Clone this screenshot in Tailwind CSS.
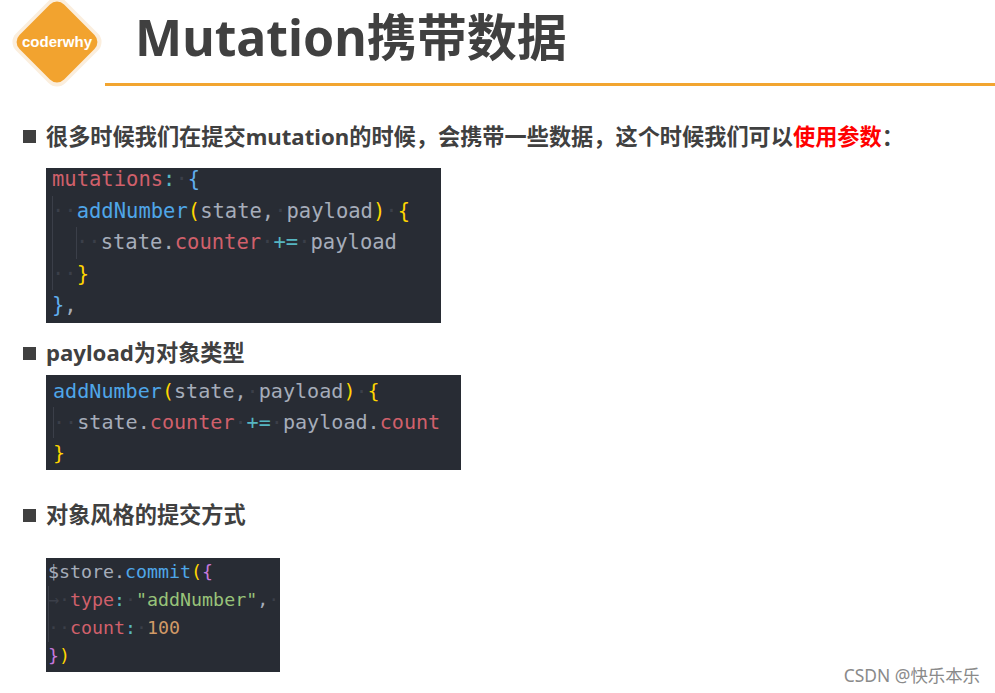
<!DOCTYPE html>
<html lang="en">
  <head>
    <meta charset="UTF-8" />
    <title>Mutation携带数据</title>
    <script src="https://cdn.jsdelivr.net/npm/@tailwindcss/browser@4"></script>
  </head>
  <body class="bg-white">
    <div class="relative w-[995px] h-[693px] overflow-hidden font-['Noto_Sans','Noto_Sans_CJK_SC',sans-serif] text-[#404040]">
      <!-- logo -->
      <div class="absolute left-[11px] top-[-4px] w-[92px] h-[92px] flex items-center justify-center">
        <svg class="absolute inset-0" width="92" height="92" viewBox="0 0 92 92">
          <rect x="11" y="11" width="70" height="70" rx="12" transform="rotate(45 46 46)" fill="#fbeedd" />
          <rect x="14.5" y="14.5" width="63" height="63" rx="10" transform="rotate(45 46 46)" fill="#f2a32f" />
        </svg>
        <span class="relative font-['Liberation_Sans',sans-serif] font-bold text-[15px] text-white">coderwhy</span>
      </div>

      <!-- header -->
      <div class="ml-[105px] h-[86px] border-b-[3px] border-[#f2a530] pl-[30px]">
        <h1 class="font-bold text-[50px] leading-[74px]">Mutation携带数据</h1>
      </div>

      <div class="pl-[23px] pt-[34px]">
        <div class="flex items-center gap-[10px] h-[33px]">
          <span class="w-[13px] h-[13px] bg-[#404040]"></span>
          <p class="font-bold text-[22.2px] whitespace-nowrap">很多时候我们在提交mutation的时候，会携带一些数据，这个时候我们可以<span class="text-[#ff0000]">使用参数</span>：</p>
        </div>

        <!-- code: mutations -->
        <div class="flow-root ml-[23px] mt-[15px] w-[395px] h-[155px] bg-[#282c34] pl-[6px] font-['DejaVu_Sans_Mono',monospace] text-[20.5px] leading-[31.5px] whitespace-nowrap text-[#a6adba]">
          <div class="-mt-[4px]">
            <div><span class="text-[#d0606b]">mutations</span><span class="text-[#56b6c2]">:</span><span class="text-[#3b3f49]">·</span><span class="text-[#61afef]">{</span></div>
            <div class="border-l border-[#3b3f49]">
              <div class="-ml-px">
                <div><span class="text-[#3b3f49]">··</span><span class="text-[#4fa6e8]">addNumber</span><span class="text-[#ffd500]">(</span>state,<span class="text-[#3b3f49]">·</span>payload<span class="text-[#ffd500]">)</span><span class="text-[#3b3f49]">·</span><span class="text-[#ffd500]">{</span></div>
                <div class="ml-[24px] border-l border-[#3b3f49]">
                  <div class="-ml-px"><span class="text-[#3b3f49]">··</span>state.<span class="text-[#d0606b]">counter</span><span class="text-[#3b3f49]">·</span><span class="text-[#56b6c2]">+=</span><span class="text-[#3b3f49]">·</span>payload</div>
                </div>
                <div><span class="text-[#3b3f49]">··</span><span class="text-[#ffd500]">}</span></div>
              </div>
            </div>
            <div><span class="text-[#61afef]">}</span>,</div>
          </div>
        </div>

        <div class="flex items-center gap-[10px] h-[32px] mt-[14px]">
          <span class="w-[13px] h-[13px] bg-[#404040]"></span>
          <p class="font-bold text-[22.2px] whitespace-nowrap">payload为对象类型</p>
        </div>

        <!-- code: payload object -->
        <div class="ml-[23px] mt-[6px] w-[415px] h-[95px] bg-[#282c34] pl-[7px] pt-px font-['DejaVu_Sans_Mono',monospace] text-[20.1px] leading-[31px] whitespace-nowrap text-[#a6adba]">
          <div><span class="text-[#4fa6e8]">addNumber</span><span class="text-[#ffd500]">(</span>state,<span class="text-[#3b3f49]">·</span>payload<span class="text-[#ffd500]">)</span><span class="text-[#3b3f49]">·</span><span class="text-[#ffd500]">{</span></div>
          <div class="border-l border-[#3b3f49]">
            <div class="-ml-px"><span class="text-[#3b3f49]">··</span>state.<span class="text-[#d0606b]">counter</span><span class="text-[#3b3f49]">·</span><span class="text-[#56b6c2]">+=</span><span class="text-[#3b3f49]">·</span>payload.<span class="text-[#d0606b]">count</span></div>
          </div>
          <div><span class="text-[#ffd500]">}</span></div>
        </div>

        <div class="flex items-center gap-[10px] h-[32px] mt-[29px]">
          <span class="w-[13px] h-[13px] bg-[#404040]"></span>
          <p class="font-bold text-[22.2px] whitespace-nowrap">对象风格的提交方式</p>
        </div>

        <!-- code: commit -->
        <div class="ml-[23px] mt-[27px] w-[234px] h-[114px] bg-[#282c34] pl-[2px] font-['DejaVu_Sans_Mono',monospace] text-[18.3px] leading-[28px] whitespace-nowrap text-[#a6adba]">
          <div>$store.<span class="text-[#4fa6e8]">commit</span><span class="text-[#ffd500]">(</span><span class="text-[#c678dd]">{</span></div>
          <div class="border-l border-[#3b3f49]">
            <div class="-ml-px">
              <div><span class="text-[#3b3f49]">→·</span><span class="text-[#d0606b]">type</span><span class="text-[#56b6c2]">:</span><span class="text-[#3b3f49]">·</span><span class="text-[#98c379]">"addNumber"</span>,<span class="text-[#3b3f49]">·</span></div>
              <div><span class="text-[#3b3f49]">··</span><span class="text-[#d0606b]">count</span><span class="text-[#56b6c2]">:</span><span class="text-[#3b3f49]">·</span><span class="text-[#d19a66]">100</span></div>
            </div>
          </div>
          <div><span class="text-[#c678dd]">}</span><span class="text-[#ffd500]">)</span></div>
        </div>
      </div>

      <!-- watermark -->
      <span class="absolute right-[15px] top-[663px] text-[17.4px] leading-[24px] text-[#8a8a8a]">CSDN @快乐本乐</span>
    </div>
  </body>
</html>
